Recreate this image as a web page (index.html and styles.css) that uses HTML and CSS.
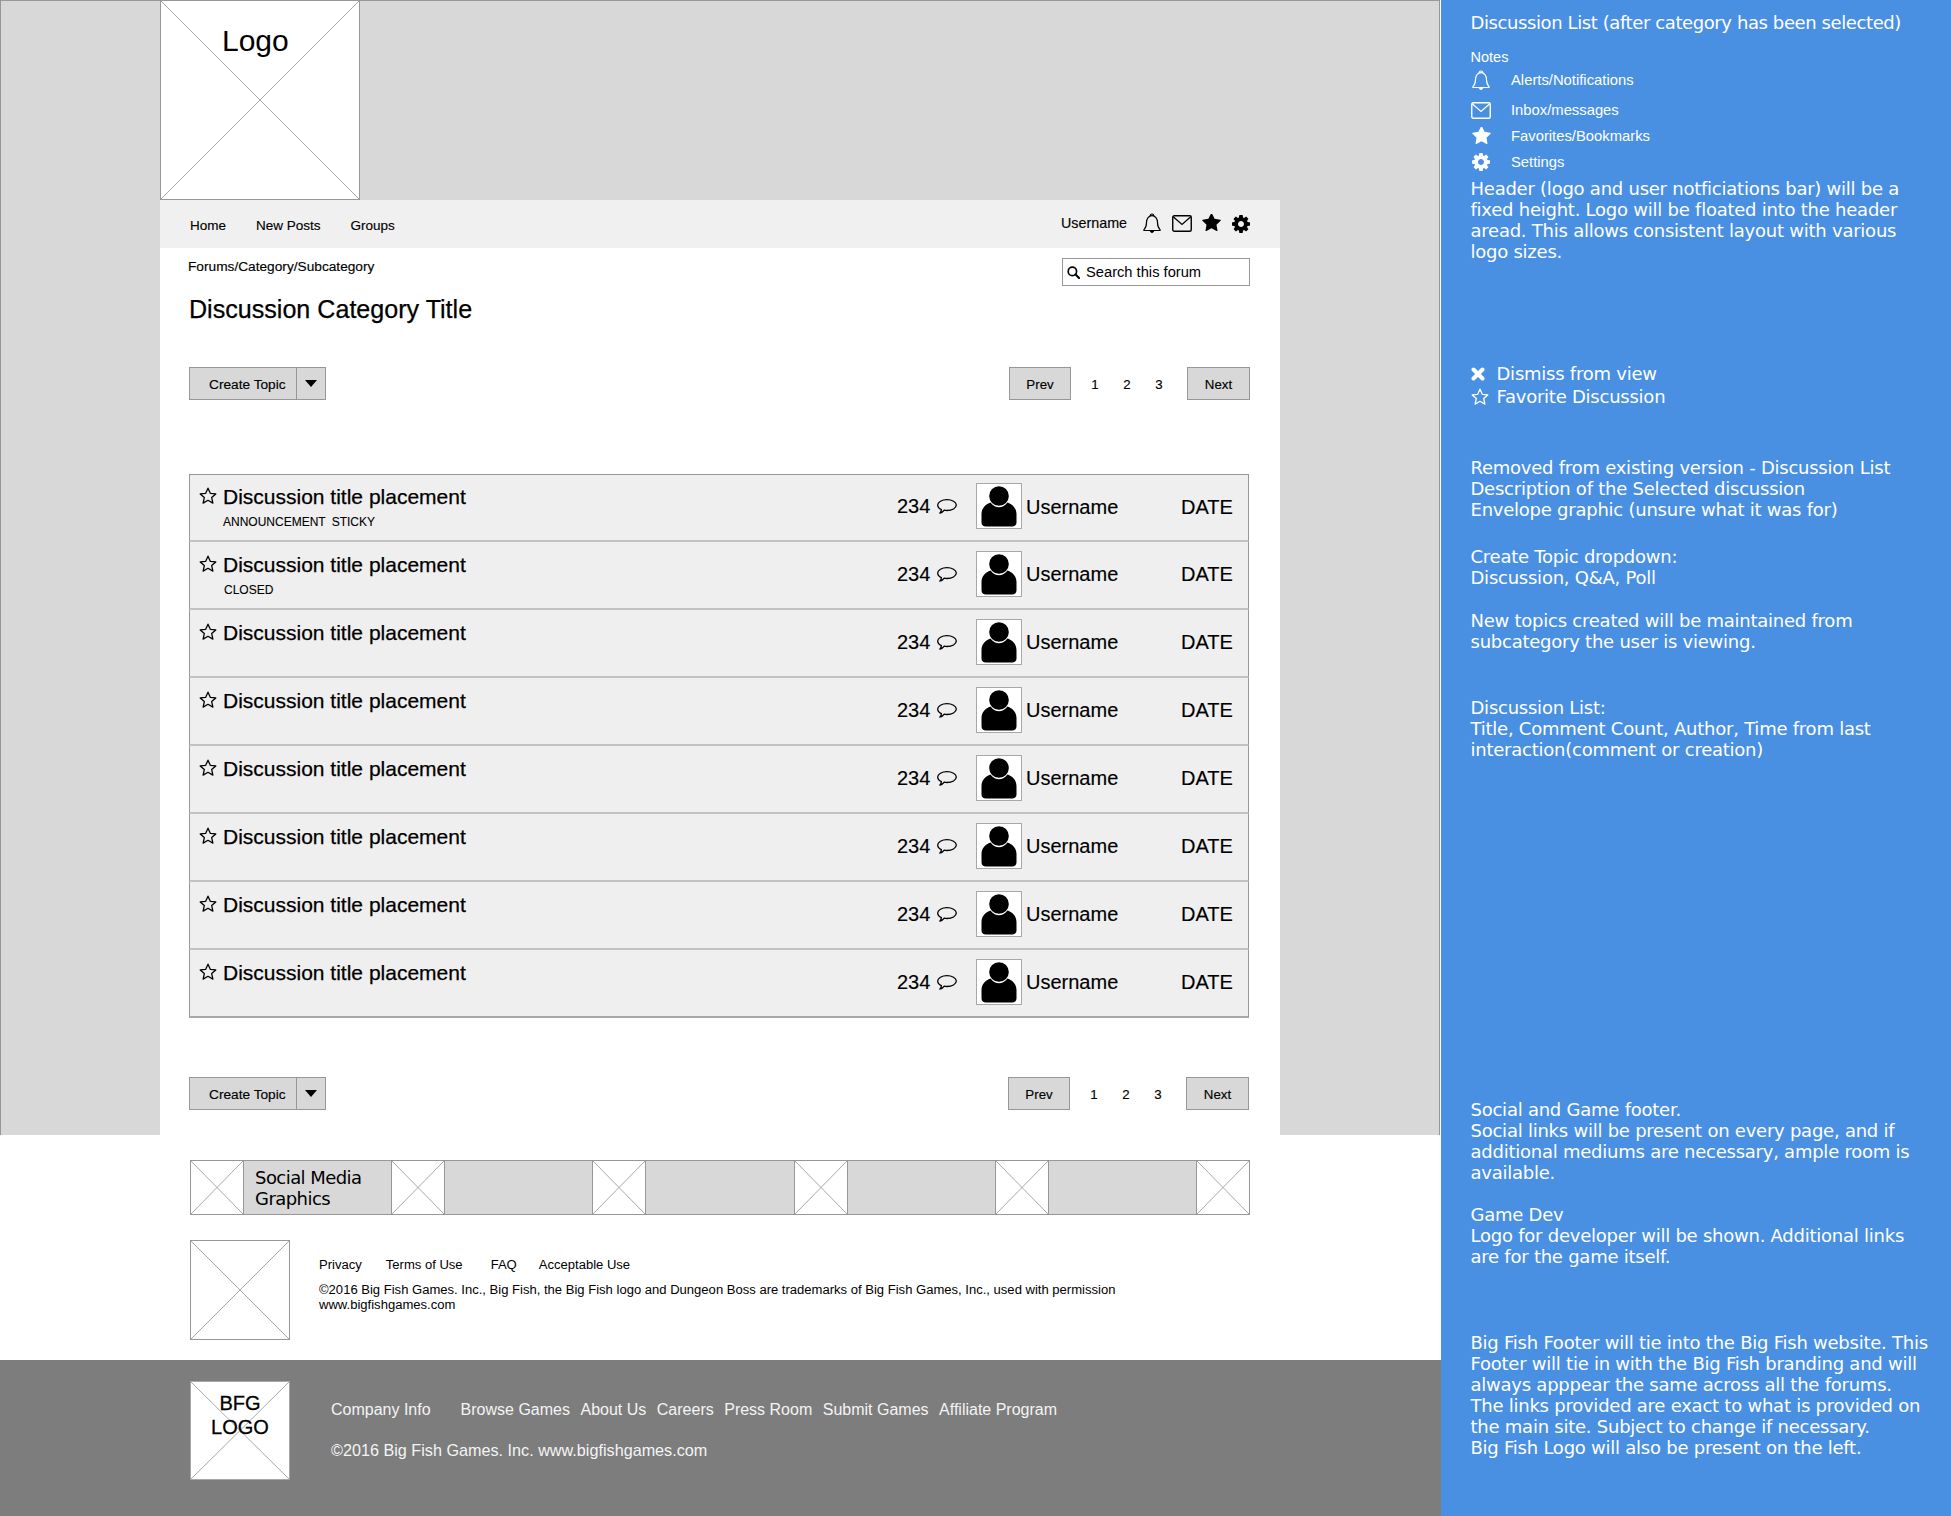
FILE: index.html
```html
<!DOCTYPE html>
<html lang="en">
<head>
<meta charset="utf-8">
<title>Discussion List wireframe</title>
<link rel="stylesheet" href="styles.css">
</head>
<body>
<svg class="sprite" aria-hidden="true">
  <symbol id="i-bell" viewBox="0 0 18 20"><path d="M7.3 2.6C7.3 1.6 8 1 9 1s1.700.6 1.700 1.600M1 16.600c1.600-1.500 2.500-3.200 2.500-7 0-4 2.300-7 5.500-7s5.500 3 5.500 7c0 3.800.9 5.500 2.500 7 .4.400.2.900-.4.900H1.400c-.6 0-.8-.5-.4-.9z" fill="none" stroke="currentColor" stroke-width="1.200"/><path d="M6.500 17.500h5C11 19 10 20 9 20s-2-1-2.500-2.500z" fill="currentColor"/></symbol>
  <symbol id="i-mail" viewBox="0 0 20 17"><rect x=".75" y=".75" width="18.500" height="15.500" rx="1.500" fill="none" stroke="currentColor" stroke-width="1.400"/><path d="M1.200 1.800 10 9.500l8.800-7.700" fill="none" stroke="currentColor" stroke-width="1.300"/></symbol>
  <symbol id="i-star" viewBox="64 100 1664 1600"><path fill="currentColor" d="M1728 647q0 22-26 48l-363 354 86 500q1 7 1 20 0 21-10.500 35.500t-30.500 14.500q-19 0-40-12l-449-236-449 236q-22 12-40 12-21 0-31.500-14.500t-10.500-35.500q0-6 2-20l86-500-364-354q-25-27-25-48 0-37 56-46l502-73 225-455q19-41 49-41t49 41l225 455 502 73q56 9 56 46z"/></symbol>
  <symbol id="i-star-o" viewBox="0 0 18 18"><path d="M9 1.200l2.300 5.100 5.500.6-4.100 3.700 1.200 5.500L9 13.300l-4.900 2.800 1.200-5.500L1.200 6.900l5.500-.6z" fill="none" stroke="currentColor" stroke-width="1.300" stroke-linejoin="round"/></symbol>
  <symbol id="i-gear" viewBox="128 128 1536 1536"><path fill="currentColor" d="M1152 896q0-106-75-181t-181-75-181 75-75 181 75 181 181 75 181-75 75-181zm512-109v222q0 12-8 23t-20 13l-185 28q-19 54-39 91 35 50 107 138 10 12 10 25t-9 23q-27 37-99 108t-94 71q-12 0-26-9l-138-108q-44 23-91 38-16 136-29 186-7 28-36 28h-222q-14 0-24.500-8.500t-11.500-21.500l-28-184q-49-16-90-37l-141 107q-10 9-25 9-14 0-25-11-126-114-165-168-7-10-7-23 0-12 8-23 15-21 51-66.500t54-70.500q-27-50-41-99l-183-27q-13-2-21-12.500t-8-23.500v-222q0-12 8-23t19-13l186-28q14-46 39-92-40-57-107-138-10-12-10-24 0-10 9-23 26-36 98.500-107.500t94.500-71.500q13 0 26 10l138 107q44-23 91-38 16-136 29-186 7-28 36-28h222q14 0 24.500 8.500t11.500 21.500l28 184q49 16 90 37l142-107q9-9 24-9 13 0 25 10 129 119 165 170 7 8 7 22 0 12-8 23-15 21-51 66.500t-54 70.500q26 50 41 98l183 28q13 2 21 12.500t8 23.500z"/></symbol>
  <symbol id="i-search" viewBox="0 0 14 14"><circle cx="5.800" cy="5.800" r="4.500" fill="none" stroke="currentColor" stroke-width="1.800"/><path d="M9.200 9.200 13 13" stroke="currentColor" stroke-width="2.200" stroke-linecap="round"/></symbol>
  <symbol id="i-comment" viewBox="0 0 20 15"><path d="M10 .7c5 0 9.300 2.300 9.300 5.400s-4.300 5.400-9.300 5.400c-1 0-2-.1-2.800-.3C6.200 12.700 4.800 13.800 2.800 14.200c.9-1 1.500-2.200 1.600-3.500C2 9.700.7 8 .7 6.100.7 3 5 .7 10 .7z" fill="none" stroke="currentColor" stroke-width="1.300" stroke-linejoin="round"/></symbol>
  <symbol id="i-person" viewBox="0 0 36 42"><circle cx="18" cy="11" r="9.800" fill="currentColor"/><path d="M9.500 17.500c2.200 3 5.200 4.800 8.500 4.800s6.300-1.800 8.500-4.800C31.500 19 35.500 23.500 35.500 29v8.500c0 2.500-2 4-4.500 4H5c-2.500 0-4.500-1.500-4.500-4V29C.5 23.500 4.500 19 9.500 17.500z" fill="currentColor"/></symbol>
  <symbol id="i-x" viewBox="0 0 14 14"><path d="M2.500 2.500l9 9m0-9-9 9" stroke="currentColor" stroke-width="4" stroke-linecap="round"/></symbol>
  <symbol id="i-cross" viewBox="0 0 100 100" preserveAspectRatio="none"><path d="M0 0 100 100M100 0 0 100" fill="none" stroke="#a8a8a8" stroke-width="1" vector-effect="non-scaling-stroke"/></symbol>
</svg>
<div class="page">
  <div class="board">
    <div class="stage">
      <main class="column">
        <div class="logo ph">
          <svg class="cross"><use href="#i-cross"/></svg>
          <span class="logo-text">Logo</span>
        </div>
        <nav class="nav">
          <a class="nav-home">Home</a>
          <a class="nav-posts">New Posts</a>
          <a>Groups</a>
          <span class="nav-user">Username</span>
          <svg class="ico ico-bell"><use href="#i-bell"/></svg>
          <svg class="ico ico-mail"><use href="#i-mail"/></svg>
          <svg class="ico ico-star"><use href="#i-star"/></svg>
          <svg class="ico ico-gear"><use href="#i-gear"/></svg>
        </nav>
        <div class="content">
          <div class="crumb-row">
            <span class="crumb">Forums/Category/Subcategory</span>
            <div class="search">
              <svg class="ico-search"><use href="#i-search"/></svg>
              <span>Search this forum</span>
            </div>
          </div>
          <h1 class="title">Discussion Category Title</h1>
          <div class="toolbar toolbar-top">
            <div class="split">
              <span class="split-main">Create Topic</span>
              <span class="split-arrow"><i class="caret"></i></span>
            </div>
            <div class="pager">
              <span class="page-btn">Prev</span>
              <span class="page-nums"><span>1</span><span>2</span><span>3</span></span>
              <span class="page-btn page-next">Next</span>
            </div>
          </div>

          <section class="list">
            <article class="row row-first">
              <svg class="fav"><use href="#i-star-o"/></svg>
              <div><h2 class="row-title">Discussion title placement</h2><p class="tags"><span class="tag-gap">ANNOUNCEMENT</span><span>STICKY</span></p></div>
              <div class="count">234<svg class="ico-comment"><use href="#i-comment"/></svg></div>
              <div class="avatar"><svg><use href="#i-person"/></svg></div>
              <div class="user">Username</div>
              <div class="date">DATE</div>
            </article>
            <article class="row">
              <svg class="fav"><use href="#i-star-o"/></svg>
              <div><h2 class="row-title">Discussion title placement</h2><p class="tags tags-closed">CLOSED</p></div>
              <div class="count">234<svg class="ico-comment"><use href="#i-comment"/></svg></div>
              <div class="avatar"><svg><use href="#i-person"/></svg></div>
              <div class="user">Username</div>
              <div class="date">DATE</div>
            </article>
            <article class="row">
              <svg class="fav"><use href="#i-star-o"/></svg>
              <div><h2 class="row-title">Discussion title placement</h2></div>
              <div class="count">234<svg class="ico-comment"><use href="#i-comment"/></svg></div>
              <div class="avatar"><svg><use href="#i-person"/></svg></div>
              <div class="user">Username</div>
              <div class="date">DATE</div>
            </article>
            <article class="row">
              <svg class="fav"><use href="#i-star-o"/></svg>
              <div><h2 class="row-title">Discussion title placement</h2></div>
              <div class="count">234<svg class="ico-comment"><use href="#i-comment"/></svg></div>
              <div class="avatar"><svg><use href="#i-person"/></svg></div>
              <div class="user">Username</div>
              <div class="date">DATE</div>
            </article>
            <article class="row">
              <svg class="fav"><use href="#i-star-o"/></svg>
              <div><h2 class="row-title">Discussion title placement</h2></div>
              <div class="count">234<svg class="ico-comment"><use href="#i-comment"/></svg></div>
              <div class="avatar"><svg><use href="#i-person"/></svg></div>
              <div class="user">Username</div>
              <div class="date">DATE</div>
            </article>
            <article class="row">
              <svg class="fav"><use href="#i-star-o"/></svg>
              <div><h2 class="row-title">Discussion title placement</h2></div>
              <div class="count">234<svg class="ico-comment"><use href="#i-comment"/></svg></div>
              <div class="avatar"><svg><use href="#i-person"/></svg></div>
              <div class="user">Username</div>
              <div class="date">DATE</div>
            </article>
            <article class="row">
              <svg class="fav"><use href="#i-star-o"/></svg>
              <div><h2 class="row-title">Discussion title placement</h2></div>
              <div class="count">234<svg class="ico-comment"><use href="#i-comment"/></svg></div>
              <div class="avatar"><svg><use href="#i-person"/></svg></div>
              <div class="user">Username</div>
              <div class="date">DATE</div>
            </article>
            <article class="row">
              <svg class="fav"><use href="#i-star-o"/></svg>
              <div><h2 class="row-title">Discussion title placement</h2></div>
              <div class="count">234<svg class="ico-comment"><use href="#i-comment"/></svg></div>
              <div class="avatar"><svg><use href="#i-person"/></svg></div>
              <div class="user">Username</div>
              <div class="date">DATE</div>
            </article>
          </section>

          <div class="toolbar toolbar-bottom">
            <div class="split">
              <span class="split-main">Create Topic</span>
              <span class="split-arrow"><i class="caret"></i></span>
            </div>
            <div class="pager">
              <span class="page-btn">Prev</span>
              <span class="page-nums"><span>1</span><span>2</span><span>3</span></span>
              <span class="page-btn page-next">Next</span>
            </div>
          </div>
        </div>
      </main>
    </div>

    <footer class="game-footer">
      <div class="social">
        <div class="ph social-box"><svg class="cross"><use href="#i-cross"/></svg></div>
        <div class="social-text">Social Media<br>Graphics</div>
        <div class="ph social-box"><svg class="cross"><use href="#i-cross"/></svg></div>
        <div class="social-text"></div>
        <div class="ph social-box"><svg class="cross"><use href="#i-cross"/></svg></div>
        <div class="social-text"></div>
        <div class="ph social-box"><svg class="cross"><use href="#i-cross"/></svg></div>
        <div class="social-text"></div>
        <div class="ph social-box"><svg class="cross"><use href="#i-cross"/></svg></div>
        <div class="social-text"></div>
        <div class="ph social-box"><svg class="cross"><use href="#i-cross"/></svg></div>
      </div>
      <div class="dev">
        <div class="ph dev-logo"><svg class="cross"><use href="#i-cross"/></svg></div>
        <div class="dev-text">
          <div class="dev-links"><a class="dl-privacy">Privacy</a><a class="dl-terms">Terms of Use</a><a class="dl-faq">FAQ</a><a>Acceptable Use</a></div>
          <p class="dev-copy">©2016 Big Fish Games. Inc., Big Fish, the Big Fish logo and Dungeon Boss are trademarks of Big Fish Games, Inc., used with permission<br>www.bigfishgames.com</p>
        </div>
      </div>
    </footer>

    <footer class="bfg-footer">
      <div class="ph bfg-logo"><svg class="cross"><use href="#i-cross"/></svg><span class="bfg-text">BFG<br>LOGO</span></div>
      <div class="bfg-text-col">
        <div class="bfg-links"><a class="bl-company">Company Info</a><a>Browse Games</a><a>About Us</a><a>Careers</a><a>Press Room</a><a>Submit Games</a><a>Affiliate Program</a></div>
        <p class="bfg-copy">©2016 Big Fish Games. Inc. www.bigfishgames.com</p>
      </div>
    </footer>
  </div>

  <aside class="notes">
    <p class="n-head">Discussion List (after category has been selected)</p>
    <p class="n-label">Notes</p>
    <ul class="legend">
      <li class="lg-alerts"><svg class="lg-ico lg-bell"><use href="#i-bell"/></svg>Alerts/Notifications</li>
      <li class="lg-inbox"><svg class="lg-ico lg-mail"><use href="#i-mail"/></svg>Inbox/messages</li>
      <li><svg class="lg-ico lg-star"><use href="#i-star"/></svg>Favorites/Bookmarks</li>
      <li><svg class="lg-ico lg-gear"><use href="#i-gear"/></svg>Settings</li>
    </ul>
    <p class="n-block n-header">Header (logo and user notficiations bar) will be a<br>fixed height. Logo will be floated into the header<br>aread. This allows consistent layout with various<br>logo sizes.</p>
    <ul class="actions">
      <li><svg class="act-x"><use href="#i-x"/></svg>Dismiss from view</li>
      <li><svg class="act-star"><use href="#i-star-o"/></svg>Favorite Discussion</li>
    </ul>
    <p class="n-block n-removed">Removed from existing version - Discussion List<br>Description of the Selected discussion<br>Envelope graphic (unsure what it was for)</p>
    <p class="n-block n-create">Create Topic dropdown:<br>Discussion, Q&amp;A, Poll</p>
    <p class="n-block n-new">New topics created will be maintained from<br>subcategory the user is viewing.</p>
    <p class="n-block n-list">Discussion List:<br>Title, Comment Count, Author, Time from last<br>interaction(comment or creation)</p>
    <p class="n-block n-social">Social and Game footer.<br>Social links will be present on every page, and if<br>additional mediums are necessary, ample room is<br>available.</p>
    <p class="n-block n-dev">Game Dev<br>Logo for developer will be shown. Additional links<br>are for the game itself.</p>
    <p class="n-block n-bfg">Big Fish Footer will tie into the Big Fish website. This<br>Footer will tie in with the Big Fish branding and will<br>always apppear the same across all the forums.<br>The links provided are exact to what is provided on<br>the main site. Subject to change if necessary.<br>Big Fish Logo will also be present on the left.</p>
  </aside>
</div>
</body>
</html>
```
FILE: styles.css
```css
* { box-sizing: border-box; }
html, body { margin: 0; padding: 0; }
body {
  width: 1951px;
  height: 1516px;
  overflow: hidden;
  background: #4a90e2;
  color: #000;
  font-family: "Liberation Sans", Arial, sans-serif;
}
p, h1, h2, ul { margin: 0; padding: 0; }
ul { list-style: none; }
.sprite { display: none; }

.page { display: flex; align-items: stretch; height: 1516px; }
.board { width: 1441px; background: #fff; }

/* grey canvas */
.stage {
  background: #d8d8d8;
  border: 1px solid #979797;
  border-bottom: 0;
  margin-right: 1px;
  padding-left: 159px;
}
.column { width: 1120px; margin-top: -1px; }

/* X-marked placeholder */
.ph { position: relative; background: #fff; border: 1px solid #979797; }
.cross { position: absolute; inset: 0; width: 100%; height: 100%; display: block; }

.logo { width: 200px; height: 200px; }
.logo-text {
  position: absolute;
  left: 61px;
  top: 22px;
  font-size: 30px;
  line-height: 36px;
}

/* nav bar */
.nav {
  display: flex;
  align-items: center;
  height: 48px;
  padding: 3px 30px 0 30px;
  background: #f0f0f0;
  font-size: 13.500px;
  -webkit-text-stroke: .15px #000;
}
.nav-home { margin-right: 30px; }
.nav-posts { margin-right: 30px; }
.nav-user { margin-left: auto; font-size: 14.300px; margin-top: -5px; }
.ico { display: block; color: #000; margin-top: -6px; }
.ico-bell { width: 18px; height: 20px; margin-left: 16px; }
.ico-mail { width: 20px; height: 17px; margin-left: 11px; margin-top: -4px; }
.ico-star { width: 19px; height: 18px; margin-left: 10px; margin-top: -6px; }
.ico-gear { width: 18px; height: 18px; margin-left: 11px; margin-top: -4px; }

.content { padding: 10px 30px 25px 29px; background: #fff; }
.crumb-row { display: flex; justify-content: space-between; align-items: flex-start; }
.crumb { font-size: 13.700px; line-height: 18px; margin-left: -1px; -webkit-text-stroke: .15px #000; }
.search {
  display: flex;
  align-items: center;
  width: 188px;
  height: 28px;
  padding-left: 4px;
  background: #fff;
  border: 1px solid #979797;
  font-size: 14.700px;
}
.ico-search { width: 13px; height: 13px; margin-right: 6px; flex: none; }

.title {
  margin-top: 9px;
  font-size: 25.100px;
  line-height: 29px;
  font-weight: 400;
  -webkit-text-stroke: .25px #000;
}

/* toolbars */
.toolbar { display: flex; justify-content: space-between; height: 33px; }
.toolbar-top { margin-top: 43px; }
.toolbar-bottom { margin-top: 59px; }
.toolbar-bottom .pager { margin-right: 1px; }
.split {
  display: flex;
  width: 137px;
  background: #d8d8d8;
  border: 1px solid #979797;
  font-size: 13.700px;
  -webkit-text-stroke: .15px #000;
}
.split-main {
  width: 107px;
  padding-left: 19px;
  line-height: 33px;
  border-right: 1px solid #979797;
}
.split-arrow { flex: 1; display: flex; align-items: center; justify-content: center; }
.caret {
  display: block;
  width: 0;
  height: 0;
  border-left: 6px solid transparent;
  border-right: 6px solid transparent;
  border-top: 7px solid #000;
}
.pager { display: flex; align-items: stretch; font-size: 13.300px; -webkit-text-stroke: .15px #000; }
.page-btn {
  width: 62px;
  display: flex;
  align-items: center;
  justify-content: center;
  padding-top: 2px;
  background: #d8d8d8;
  border: 1px solid #979797;
}
.page-next { width: 63px; }
.page-nums { display: flex; margin: 0 12px 0 8px; padding-top: 2px; align-items: center; }
.page-nums span { width: 32px; text-align: center; }

/* list */
.list { margin-top: 74px; width: 1060px; }
.row {
  display: grid;
  grid-template-columns: 24px 674px 79px 50px 155px 1fr;
  align-items: start;
  height: 68px;
  padding: 9px 17px 0 9px;
  background: #efefef;
  border-left: 1px solid #979797;
  border-right: 1px solid #979797;
  border-bottom: 2px solid #c2c2c2;
}
.row-first { border-top: 1px solid #979797; padding-top: 8px; padding-right: 16px; }
.row:last-child { border-bottom-color: #a8a8a8; }
.fav { width: 18px; height: 18px; margin-top: 4px; display: block; }
.row-title { font-size: 21px; line-height: 28px; font-weight: 400; -webkit-text-stroke: .25px #000; }
.tags { font-size: 12px; line-height: 20px; padding-top: 1px; display: flex; -webkit-text-stroke: .1px #000; }
.tag-gap { margin-right: 6px; }
.tags-closed { padding-left: 1px; }
.count {
  display: flex;
  align-items: center;
  height: 46px;
  font-size: 20px;
  -webkit-text-stroke: .15px #000;
}
.ico-comment { width: 20px; height: 15px; margin-left: 7px; flex: none; }
.avatar {
  width: 46px;
  height: 46px;
  display: flex;
  justify-content: center;
  align-items: center;
  background: #fff;
  border: 1px solid #a8a8a8;
}
.avatar svg { width: 36px; height: 42px; display: block; }
.user { font-size: 20px; line-height: 46px; -webkit-text-stroke: .15px #000; }
.date { font-size: 20px; line-height: 46px; justify-self: end; -webkit-text-stroke: .15px #000; }
.row-first .count, .row-first .user, .row-first .date { padding-top: 1px; }

/* game footer */
.game-footer { padding: 25px 191px 20px 190px; background: #fff; height: 225px; }
.social {
  display: flex;
  height: 55px;
  background: #d8d8d8;
  border-top: 1px solid #979797;
  border-bottom: 1px solid #979797;
}
.social-box { width: 54px; flex: none; border-top: 0; border-bottom: 0; }
.social-text {
  flex: 1;
  padding: 6px 0 0 11px;
  font-family: "DejaVu Sans", sans-serif;
  font-size: 18px;
  line-height: 21px;
  letter-spacing: -.55px;
}
.dev { display: flex; margin-top: 25px; }
.dev-logo { width: 100px; height: 100px; flex: none; }
.dev-text { margin-left: 29px; padding-top: 16px; font-size: 13.050px; }
.dev-links { display: flex; line-height: 18px; }
.dl-privacy { margin-right: 24px; }
.dl-terms { margin-right: 28px; }
.dl-faq { margin-right: 22px; }
.dev-copy { margin-top: 8px; line-height: 15px; white-space: nowrap; }

/* BFG footer */
.bfg-footer {
  display: flex;
  height: 156px;
  padding: 21px 0 0 190px;
  background: #7d7d7d;
  color: #f4f4f4;
}
.bfg-logo { width: 100px; height: 99px; flex: none; border-color: #a8a8a8; }
.bfg-text {
  position: absolute;
  left: 0;
  right: 0;
  top: 9px;
  color: #000;
  font-size: 20px;
  line-height: 24px;
  text-align: center;
  -webkit-text-stroke: .3px #000;
}
.bfg-text-col { margin-left: 41px; padding-top: 19px; font-size: 16.200px; line-height: 20px; }
.bfg-links { display: flex; gap: 10.500px; font-size: 16px; }
.bl-company { margin-right: 19.500px; }
.bfg-copy { margin-top: 20px; }

/* notes panel */
.notes {
  flex: 1;
  padding: 12px 0 0 29.500px;
  background: #4a90e2;
  color: #fff;
  font-family: "DejaVu Sans", sans-serif;
  font-size: 18px;
  line-height: 21px;
  letter-spacing: -.24px;
  white-space: nowrap;
}
.n-head { letter-spacing: -.4px; }
.n-label {
  margin-top: 16px;
  font-family: "Liberation Sans", sans-serif;
  font-size: 14.500px;
  line-height: 16px;
  letter-spacing: 0;
}
.legend { font-family: "Liberation Sans", sans-serif; font-size: 14.800px; letter-spacing: 0; }
.legend li { display: flex; align-items: center; height: 26px; padding-left: 40.500px; position: relative; }
.legend .lg-alerts { height: 30px; }
.legend .lg-inbox { margin-top: 2px; }
.lg-ico { position: absolute; left: 0; }
.lg-bell { width: 18px; height: 20px; left: 1px; }
.lg-mail { width: 20px; height: 17px; }
.lg-star { width: 19px; height: 18px; left: 1px; }
.lg-gear { width: 18px; height: 18px; left: 1px; }
.n-header { margin-top: 3px; }
.actions { margin-top: 100px; line-height: 23px; }
.actions li { display: flex; align-items: center; padding-left: 26px; position: relative; }
.act-x { position: absolute; left: 0; width: 14px; height: 14px; }
.act-star { position: absolute; left: 0; width: 18px; height: 18px; }
.n-removed { margin-top: 49px; }
.n-create { margin-top: 26px; }
.n-new { margin-top: 22px; }
.n-list { margin-top: 45px; }
.n-social { margin-top: 339px; }
.n-dev { margin-top: 21px; }
.n-bfg { margin-top: 65px; }
```
